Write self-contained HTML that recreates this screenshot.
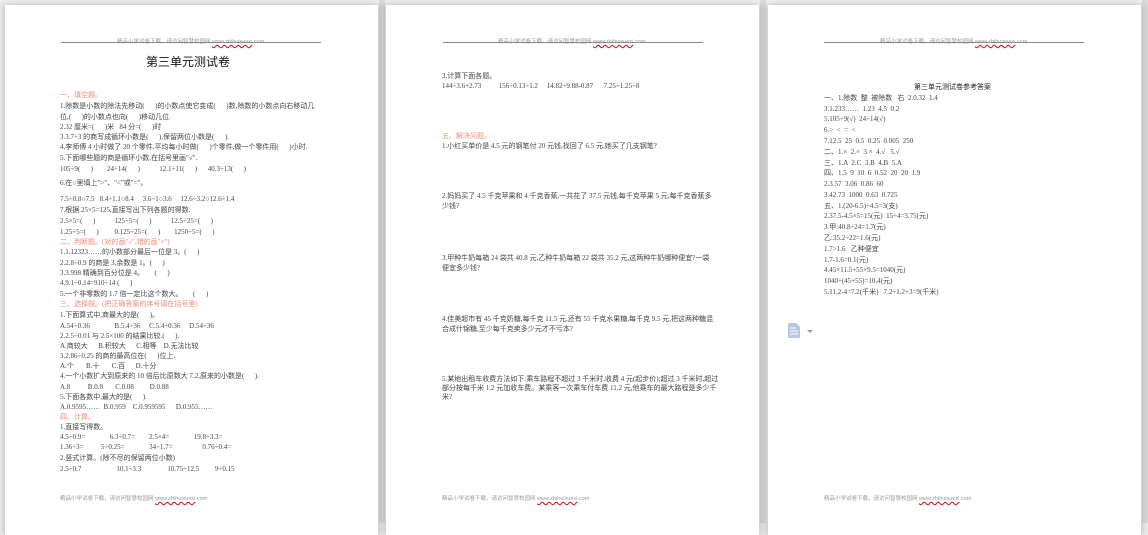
<!DOCTYPE html>
<html><head><meta charset="utf-8"><style>
*{margin:0;padding:0;box-sizing:border-box}
body{width:1148px;height:523px;background:#ececee;position:relative;overflow:hidden;font-family:"Liberation Serif","Noto Sans CJK SC",sans-serif;color:#333}
.pg{position:absolute;top:5px;width:373px;height:530px;background:#fff;box-shadow:3px 0 5px rgba(0,0,0,.12),-3px 0 5px rgba(0,0,0,.12)}
.l{position:absolute;font-size:7px;line-height:8px;white-space:pre;color:#444}
.r{color:#f08c7c}
.hd{position:absolute;font-size:5.5px;color:#999;white-space:pre;font-family:"Liberation Sans","Noto Sans CJK SC",sans-serif}
.hd u{text-decoration:underline wavy #e00;text-decoration-thickness:1px}
.hl{position:absolute;height:1px;background:#888}
.sg{position:absolute;width:1px;background:#c8c8c8}
</style></head><body>
<div class="sg" style="left:379px;top:0;height:523px;width:6px;background:#d9d9db"></div>
<div class="sg" style="left:760px;top:0;height:523px;width:6px;background:#d9d9db"></div>
<div class="sg" style="left:1142px;top:0;height:523px;width:6px;background:#d9d9db"></div>

<!-- page 1 -->
<div class="pg" style="left:5px">
<div class="hd" style="left:112px;top:32px">精品小学试卷下载，请访问智慧校园网 <u>www.zhihuixuexi</u>.com</div>
<div class="hl" style="left:56px;top:37px;width:260px"></div>
<div class="l" style="left:141px;top:50px;font-size:12px;line-height:14px;color:#111;font-family:'Noto Sans CJK SC',sans-serif">第三单元测试卷</div>
<div class="l r" style="left:55px;top:86px">一、填空题。</div>
<div class="l" style="left:55px;top:97px">1.除数是小数的除法先移动(      )的小数点使它变成(      )数,除数的小数点向右移动几</div>
<div class="l" style="left:55px;top:108px">位,(      )的小数点也向(      )移动几位.</div>
<div class="l" style="left:55px;top:118px">2.32 厘米=(      )米   84 分=(      )时</div>
<div class="l" style="left:55px;top:128px">3.3.7÷3 的商写成循环小数是(      ),保留两位小数是(      ).</div>
<div class="l" style="left:55px;top:138px">4.李师傅 4 小时做了 20 个零件,平均每小时做(      )个零件,做一个零件用(      )小时.</div>
<div class="l" style="left:55px;top:149px">5.下面哪些题的商是循环小数,在括号里画"√".</div>
<div class="l" style="left:55px;top:160px">105÷9(      )        24÷14(      )           12.1÷11(      )      40.3÷13(      )</div>
<div class="l" style="left:55px;top:174px">6.在○里填上">"、"<"或"="。</div>
<div class="l" style="left:55px;top:190px">7.5÷0.8○7.5   8.4÷1.1○8.4     3.6÷1○3.6     12.6÷3.2○12.6÷1.4</div>
<div class="l" style="left:55px;top:201px">7.根据 25×5=125,直接写出下列各题的得数.</div>
<div class="l" style="left:55px;top:212px">2.5×5=(      )           125÷5=(      )           12.5÷25=(      )</div>
<div class="l" style="left:55px;top:223px">1.25÷5=(      )         0.125÷25=(      )        1250÷5=(      )</div>
<div class="l r" style="left:55px;top:233px">二、判断题。(对的画"√",错的画"×")</div>
<div class="l" style="left:55px;top:243px">1.1.12323……的小数部分最后一位是 3。(      )</div>
<div class="l" style="left:55px;top:254px">2.2.8÷0.9 的商是 3,余数是 1。(      )</div>
<div class="l" style="left:55px;top:264px">3.3.998 精确到百分位是 4。      (      )</div>
<div class="l" style="left:55px;top:274px">4.9.1÷0.14=910÷14 (      )</div>
<div class="l" style="left:55px;top:285px">5.一个非零数的 1.7 倍一定比这个数大。      (      )</div>
<div class="l r" style="left:55px;top:295px">三、选择题。(把正确答案的序号填在括号里)</div>
<div class="l" style="left:55px;top:306px">1.下面算式中,商最大的是(      )。</div>
<div class="l" style="left:55px;top:317px">A.54÷0.36              B.5.4÷36     C.5.4÷0.36     D.54÷36</div>
<div class="l" style="left:55px;top:327px">2.2.5÷0.01 与 2.5×100 的结果比较.(      ).</div>
<div class="l" style="left:55px;top:337px">A.商较大      B.积较大      C.相等    D.无法比较</div>
<div class="l" style="left:55px;top:347px">3.2.86÷0.25 的商的最高位在(      )位上.</div>
<div class="l" style="left:55px;top:357px">A.个       B.十       C.百      D.十分</div>
<div class="l" style="left:55px;top:367px">4.一个小数扩大到原来的 10 倍后比原数大 7.2,原来的小数是(      ).</div>
<div class="l" style="left:55px;top:378px">A.8          B.0.8       C.0.08         D.0.88</div>
<div class="l" style="left:55px;top:388px">5.下面各数中,最大的是(      ).</div>
<div class="l" style="left:55px;top:398px">A.0.9595……  B.0.959    C.0.959595      D.0.955……</div>
<div class="l r" style="left:55px;top:408px">四、计算。</div>
<div class="l" style="left:55px;top:418px">1.直接写得数。</div>
<div class="l" style="left:55px;top:428px">4.5÷0.9=              6.3÷0.7=        2.5×4=              19.8÷3.3=</div>
<div class="l" style="left:55px;top:438px">1.36÷3=          5÷0.25=              34÷1.7=                 0.76÷0.4=</div>
<div class="l" style="left:55px;top:449px">2.竖式计算。(除不尽的保留两位小数)</div>
<div class="l" style="left:55px;top:460px">2.5÷0.7                    10.1÷3.3               10.75÷12.5         9÷0.15</div>
<div class="hd" style="left:55px;top:489px">精品小学试卷下载，请访问智慧校园网 <u>www.zhihuixuexi</u>.com</div>
</div>

<!-- page 2 -->
<div class="pg" style="left:386px">
<div class="hd" style="left:112px;top:32px">精品小学试卷下载，请访问智慧校园网 <u>www.zhihuixuexi</u>.com</div>
<div class="hl" style="left:57px;top:37px;width:260px"></div>
<div class="l" style="left:56px;top:67px">3.计算下面各题。</div>
<div class="l" style="left:56px;top:77px">144÷3.6+2.73          156÷0.13÷1.2     14.82÷9.88-0.87      7.25÷1.25÷8</div>
<div class="l r" style="left:56px;top:127px">五、解决问题。</div>
<div class="l" style="left:56px;top:137px">1.小红买单价是 4.5 元的钢笔付 20 元钱,找回了 6.5 元,她买了几支钢笔?</div>
<div class="l" style="left:56px;top:187px">2.妈妈买了 4.5 千克苹果和 4 千克香蕉,一共花了 37.5 元钱,每千克苹果 5 元,每千克香蕉多</div>
<div class="l" style="left:56px;top:197px">少钱?</div>
<div class="l" style="left:56px;top:249px">3.甲种牛奶每箱 24 袋共 40.8 元,乙种牛奶每箱 22 袋共 35.2 元,这两种牛奶哪种便宜?一袋</div>
<div class="l" style="left:56px;top:259px">便宜多少钱?</div>
<div class="l" style="left:56px;top:310px">4.佳美超市有 45 千克奶糖,每千克 11.5 元,还有 55 千克水果糖,每千克 9.5 元,把这两种糖混</div>
<div class="l" style="left:56px;top:320px">合成什锦糖,至少每千克卖多少元才不亏本?</div>
<div class="l" style="left:56px;top:370px">5.某地出租车收费方法如下:乘车路程不超过 3 千米时,收费 4 元(起步价);超过 3 千米时,超过</div>
<div class="l" style="left:56px;top:379px">部分按每千米 1.2 元加收车费。某乘客一次乘车付车费 11.2 元,他乘车的最大路程是多少千</div>
<div class="l" style="left:56px;top:388px">米?</div>
<div class="hd" style="left:56px;top:489px">精品小学试卷下载，请访问智慧校园网 <u>www.zhihuixuexi</u>.com</div>
</div>

<!-- page 3 -->
<div class="pg" style="left:768px">
<div class="hd" style="left:112px;top:32px">精品小学试卷下载，请访问智慧校园网 <u>www.zhihuixuexi</u>.com</div>
<div class="hl" style="left:56px;top:37px;width:260px"></div>
<div class="l" style="left:146px;top:78px;color:#222">第三单元测试卷参考答案</div>
<div class="l" style="left:56px;top:89px">一、1.除数  整  被除数   右  2.0.32  1.4</div>
<div class="l" style="left:56px;top:100px">3.1.233……  1.23  4.5  0.2</div>
<div class="l" style="left:56px;top:110px">5.105÷9(√)  24÷14(√)</div>
<div class="l" style="left:56px;top:121px">6.>  <  =  <</div>
<div class="l" style="left:56px;top:132px">7.12.5  25  0.5  0.25  0.005  250</div>
<div class="l" style="left:56px;top:143px">二、1.×  2.×  3.×  4.√   5.√</div>
<div class="l" style="left:56px;top:154px">三、1.A  2.C  3.B  4.B  5.A</div>
<div class="l" style="left:56px;top:164px">四、1.5  9  10  6  0.52  20  20  1.9</div>
<div class="l" style="left:56px;top:175px">2.3.57  3.06  0.86  60</div>
<div class="l" style="left:56px;top:186px">3.42.73  1000  0.63  0.725</div>
<div class="l" style="left:56px;top:197px">五、1.(20-6.5)÷4.5=3(支)</div>
<div class="l" style="left:56px;top:207px">2.37.5-4.5×5=15(元)  15÷4=3.75(元)</div>
<div class="l" style="left:56px;top:218px">3.甲:40.8÷24=1.7(元)</div>
<div class="l" style="left:56px;top:229px">乙:35.2÷22=1.6(元)</div>
<div class="l" style="left:56px;top:240px">1.7>1.6   乙种便宜</div>
<div class="l" style="left:56px;top:251px">1.7-1.6=0.1(元)</div>
<div class="l" style="left:56px;top:261px">4.45×11.5+55×9.5=1040(元)</div>
<div class="l" style="left:56px;top:272px">1040÷(45+55)=10.4(元)</div>
<div class="l" style="left:56px;top:283px">5.11.2-4=7.2(千米)   7.2÷1.2+3=9(千米)</div>
<svg style="position:absolute;left:19px;top:318px" width="14" height="15" viewBox="0 0 14 15"><path d="M1 0h8l4 4v11H1z" fill="#b7c9e2"/><path d="M3 5h6M3 8h8M3 11h8" stroke="#fff" stroke-width="1"/></svg>
<svg style="position:absolute;left:39px;top:325px" width="6" height="4"><path d="M0 0h6L3 3z" fill="#999"/></svg>
<div class="hd" style="left:56px;top:489px">精品小学试卷下载，请访问智慧校园网 <u>www.zhihuixuexi</u>.com</div>
</div>
</body></html>
